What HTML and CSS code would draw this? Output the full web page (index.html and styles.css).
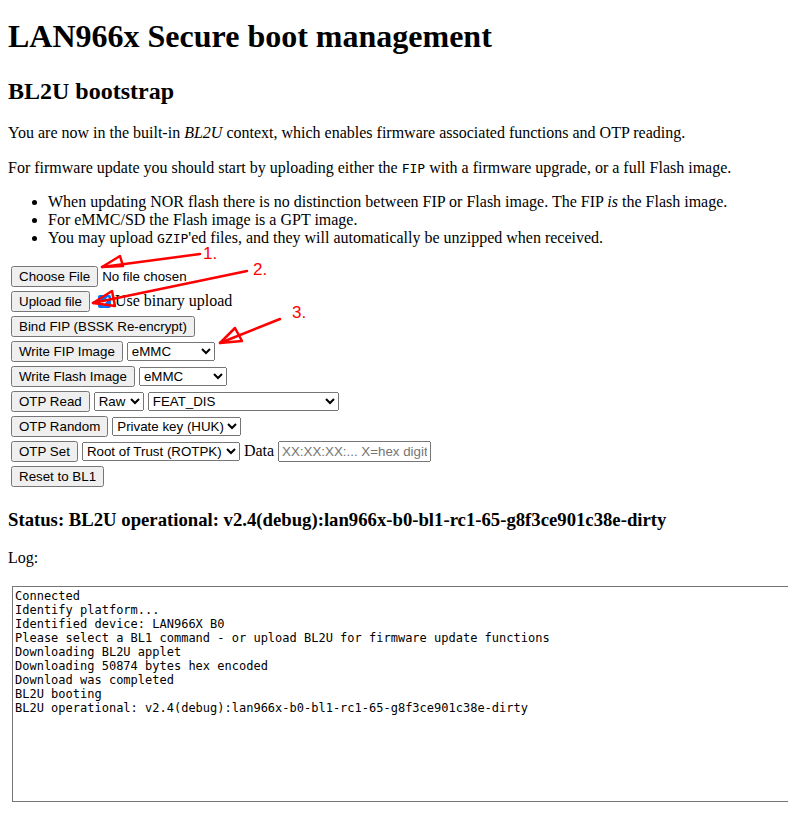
FILE: index.html
```html
<!DOCTYPE html>
<html>
<head>
<meta charset="utf-8">
<title>LAN966x Secure boot management</title>
<link rel="stylesheet" href="styles.css">
</head>
<body>
<h1>LAN966x Secure boot management</h1>
<h2>BL2U bootstrap</h2>
<p class="intro">You are now in the built-in <i>BL2U</i> context, which enables firmware associated functions and OTP reading.</p>
<p>For firmware update you should start by uploading either the <code>FIP</code> with a firmware upgrade, or a full Flash image.</p>
<ul>
<li>When updating NOR flash there is no distinction between FIP or Flash image. The FIP <i>is</i> the Flash image.</li>
<li>For eMMC/SD the Flash image is a GPT image.</li>
<li>You may upload <code>GZIP</code>'ed files, and they will automatically be unzipped when received.</li>
</ul>
<div class="controls">
<table class="cmds">
<tr><td><input type="file" class="file"></td></tr>
<tr><td><button>Upload file</button> <input type="checkbox" class="chk" checked> <label>Use binary upload</label></td></tr>
<tr><td><button>Bind FIP (BSSK Re-encrypt)</button></td></tr>
<tr><td><button>Write FIP Image</button> <select class="w88"><option>eMMC</option><option>SD</option><option>NOR</option></select></td></tr>
<tr><td><button>Write Flash Image</button> <select class="w88"><option>eMMC</option><option>SD</option><option>NOR</option></select></td></tr>
<tr><td><button>OTP Read</button> <select class="w50"><option>Raw</option><option>Hex</option></select> <select class="w191"><option>FEAT_DIS</option></select></td></tr>
<tr><td><button>OTP Random</button> <select class="w129"><option>Private key (HUK)</option></select></td></tr>
<tr><td><button>OTP Set</button> <select class="w158"><option>Root of Trust (ROTPK)</option></select> <span class="lbl">Data</span> <input type="text" class="data" placeholder="XX:XX:XX:... X=hex digit"></td></tr>
<tr><td><button>Reset to BL1</button></td></tr>
</table>
<svg class="arrows" width="320" height="110" viewBox="0 0 320 110">
<g fill="none" stroke="#ff0000" stroke-width="2.5" stroke-linejoin="round" stroke-linecap="round">
<line x1="200" y1="13" x2="102" y2="26"/>
<polygon points="102,26 120,15 123,25"/>
<line x1="247" y1="30" x2="93" y2="62"/>
<polygon points="93,62 112,50 115,65"/>
<line x1="280" y1="78" x2="220" y2="102"/>
<polygon points="220,102 235,87 242,100"/>
</g>
<g fill="#ff0000" font-family="Liberation Sans, Arial, sans-serif" font-size="17">
<text x="203" y="18">1.</text>
<text x="253" y="34">2.</text>
<text x="292" y="77">3.</text>
</g>
</svg>
</div>
<h3>Status: BL2U operational: v2.4(debug):lan966x-b0-bl1-rc1-65-g8f3ce901c38e-dirty</h3>
<p class="log-label">Log:</p>
<textarea class="log" rows="15" readonly>Connected
Identify platform...
Identified device: LAN966X B0
Please select a BL1 command - or upload BL2U for firmware update functions
Downloading BL2U applet
Downloading 50874 bytes hex encoded
Download was completed
BL2U booting
BL2U operational: v2.4(debug):lan966x-b0-bl1-rc1-65-g8f3ce901c38e-dirty</textarea>
</body>
</html>
```
FILE: styles.css
```css
body {
  margin: 8px;
  font-family: "Liberation Serif", "Times New Roman", serif;
  font-size: 16px;
  color: #000;
  background: #fff;
}
h1 {
  font-size: 32px;
  margin: 10px 0 23px;
}
h2 {
  font-size: 24px;
  margin: 20px 0 19px;
}
h3 {
  font-size: 18.72px;
  margin: 18.72px 0;
}
p {
  margin: 16px 0;
}
.intro {
  margin-bottom: 17px;
}
.log-label {
  margin-bottom: 19px;
}
code {
  font-family: "DejaVu Sans Mono", monospace;
  font-size: 13px;
}
ul {
  margin: 16px 0;
  padding-left: 40px;
}
.controls {
  position: relative;
}
.cmds {
  border-spacing: 2px;
}
.cmds td {
  padding: 1px;
  height: 21px;
}
button, select, input {
  font-family: "Liberation Sans", Arial, sans-serif;
  font-size: 13.333px;
}
.chk {
  margin: 3px 0 3px 4px;
  vertical-align: -2px;
}
.w88 { width: 88px; }
.w50 { width: 50px; }
.w191 { width: 191px; }
.w129 { width: 129px; }
.w158 { width: 158px; }
.data {
  width: 153px;
  box-sizing: border-box;
}
.arrows {
  position: absolute;
  left: -8px;
  top: -22px;
  overflow: visible;
  pointer-events: none;
}
.log {
  display: block;
  box-sizing: border-box;
  margin: 0 -8px 0 4px;
  width: 784px;
  height: 216px;
  font-family: "DejaVu Sans Mono", monospace;
  font-size: 12px;
  line-height: 14px;
  padding: 2px;
  border: 1px solid #767676;
  border-right: 0;
  resize: none;
}
```
